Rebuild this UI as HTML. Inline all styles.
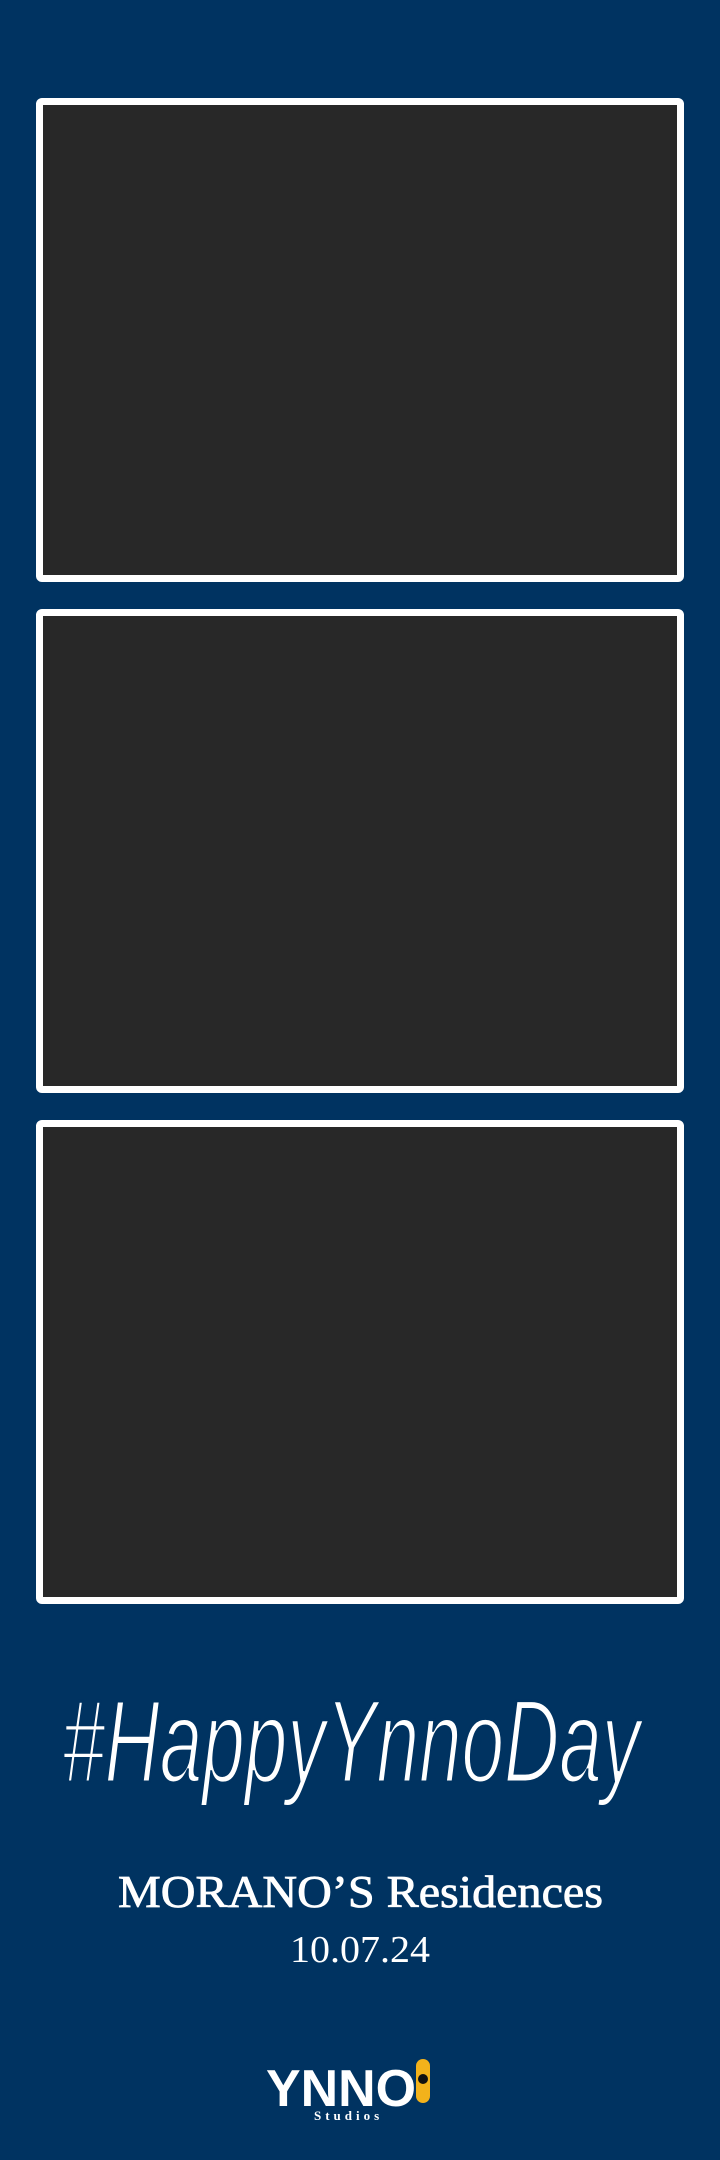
<!DOCTYPE html>
<html><head><meta charset="utf-8"><style>
html,body{margin:0;padding:0}
body{width:720px;height:2160px;background:#003361;position:relative;overflow:hidden}
.f{position:absolute;left:36px;width:634px;height:470px;border:7px solid #fff;border-radius:6px;background:#282828}
svg{position:absolute;left:0;top:0}
</style></head><body>
<div class="f" style="top:98px"></div>
<div class="f" style="top:609px"></div>
<div class="f" style="top:1120px"></div>
<svg width="720" height="2160" viewBox="0 0 720 2160">
<text x="62" y="1782" font-family="Liberation Sans, sans-serif" font-size="118" fill="#fff" stroke="#003361" stroke-width="3" textLength="578" lengthAdjust="spacingAndGlyphs" font-style="italic">#HappyYnnoDay</text>
<text x="118" y="1907" font-family="Liberation Serif, serif" font-size="46" fill="#fff" stroke="#fff" stroke-width="0.8" textLength="485" lengthAdjust="spacingAndGlyphs">MORANO’S Residences</text>
<text x="290" y="1962" font-family="Liberation Serif, serif" font-size="38" fill="#fff" textLength="140" lengthAdjust="spacingAndGlyphs">10.07.24</text>
<text x="266" y="2106" font-family="Liberation Sans, sans-serif" font-weight="bold" font-size="52" fill="#fff" textLength="150" lengthAdjust="spacingAndGlyphs">YNNO</text>
<rect x="416" y="2059" width="14" height="44" rx="7" fill="#f3b21b"/>
<circle cx="423" cy="2079" r="5" fill="#111"/>
<text x="314" y="2120" font-family="Liberation Serif, serif" font-weight="bold" font-size="13" fill="#fff" letter-spacing="4">Studios</text>
</svg>
</body></html>
